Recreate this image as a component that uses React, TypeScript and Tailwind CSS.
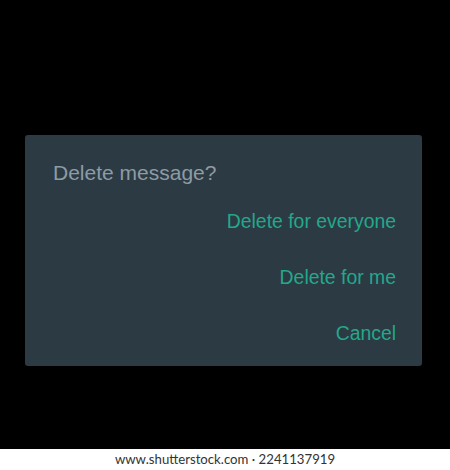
export default function App() {
  return (
    <div className="w-[450px] h-[470px] bg-black flex flex-col overflow-hidden" style={{ fontFamily: '"Liberation Sans", Arial, sans-serif' }}>
      <div className="flex-1">
        <div className="mt-[135px] ml-[25px] w-[397px] h-[231px] bg-[#2c3a44] rounded-[3px] flex flex-col pt-[26px] pl-[28px] pr-[26px]">
          <div className="text-[21px] leading-[24px] text-[#8d9ba4]">Delete message?</div>
          <div className="flex flex-col items-end mt-[24px] gap-[32px] text-[19.4px] leading-[24px] text-[#23a88a]">
            <button className="leading-[24px]">Delete for everyone</button>
            <button className="leading-[24px]">Delete for me</button>
            <button className="leading-[24px]">Cancel</button>
          </div>
        </div>
      </div>
      <div className="h-[21px] bg-white flex items-center justify-center text-[13.2px] text-[#333333]" style={{ fontFamily: 'Lato, "Liberation Sans", sans-serif' }}>
        www.shutterstock.com · 2241137919
      </div>
    </div>
  );
}
